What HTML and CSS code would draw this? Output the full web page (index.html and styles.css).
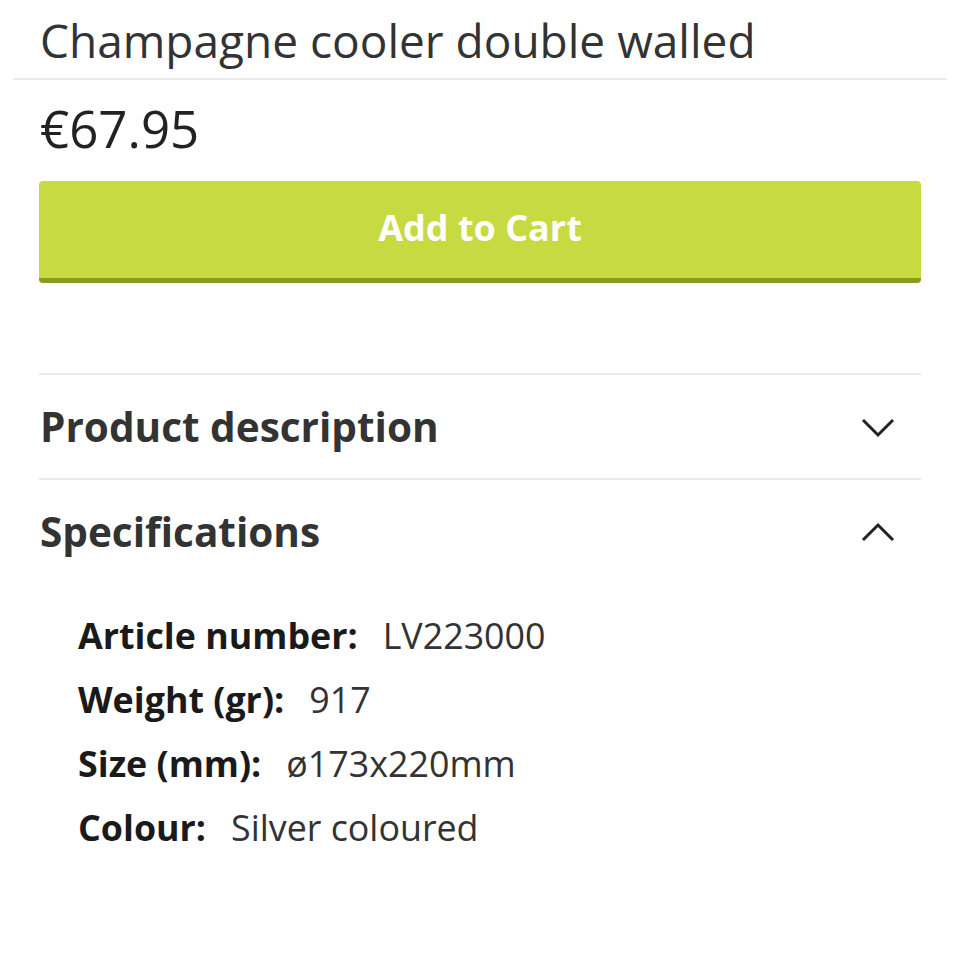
FILE: index.html
```html
<!DOCTYPE html>
<html>
<head>
<meta charset="utf-8">
<link rel="stylesheet" href="styles.css">
</head>
<body>
<div class="page">
  <h1 class="title">Champagne cooler double walled</h1>
  <div class="title-rule"></div>
  <div class="main">
    <div class="price">€67.95</div>
    <button class="cart-btn">Add to Cart</button>
    <div class="accordion">
      <div class="acc-item">
        <div class="acc-head">
          <span class="acc-title">Product description</span>
          <svg class="chev" width="34" height="22" viewBox="0 0 34 22"><polyline points="2,4 17,19 32,4" fill="none" stroke="#222" stroke-width="3"/></svg>
        </div>
      </div>
      <div class="acc-item open">
        <div class="acc-head">
          <span class="acc-title">Specifications</span>
          <svg class="chev" width="34" height="22" viewBox="0 0 34 22"><polyline points="2,19 17,4 32,19" fill="none" stroke="#222" stroke-width="3"/></svg>
        </div>
        <div class="specs">
          <div class="spec"><span class="label">Article number:</span><span class="value">LV223000</span></div>
          <div class="spec"><span class="label">Weight (gr):</span><span class="value">917</span></div>
          <div class="spec"><span class="label">Size (mm):</span><span class="value">ø173x220mm</span></div>
          <div class="spec"><span class="label">Colour:</span><span class="value">Silver coloured</span></div>
        </div>
      </div>
    </div>
  </div>
</div>
</body>
</html>
```
FILE: styles.css
```css
html, body {
  margin: 0;
  padding: 0;
  background: #fff;
}
body {
  font-family: "Open Sans", "Liberation Sans", sans-serif;
  color: #333;
}
.page {
  width: 960px;
}
.title {
  margin: 0;
  padding: 10px 40px 0;
  font-size: 46px;
  font-weight: 400;
  line-height: 60px;
  color: #333;
}
.title-rule {
  margin: 8px 13px 0;
  height: 2px;
  background: #e9e9e9;
}
.main {
  padding: 0 39px;
}
.price {
  font-size: 51px;
  line-height: 60px;
  color: #222;
  margin-top: 18px;
  padding-left: 1px;
}
.cart-btn {
  display: block;
  width: 100%;
  height: 102px;
  margin-top: 23px;
  border: none;
  border-bottom: 5px solid #8a9b22;
  border-radius: 4px;
  background: #c8da41;
  color: #fff;
  font-family: "Open Sans", "Liberation Sans", sans-serif;
  font-weight: 700;
  font-size: 36px;
  padding: 0 0 4px;
}
.accordion {
  margin-top: 90px;
}
.acc-item {
  border-top: 2px solid #ebebeb;
}
.acc-head {
  height: 103px;
  display: flex;
  align-items: center;
  justify-content: space-between;
  padding-left: 1px;
  padding-right: 26px;
}
.acc-title {
  font-size: 40.5px;
  font-weight: 700;
  color: #333;
}
.chev {
  display: block;
}
.specs {
  padding: 20px 0 0 39px;
  display: flex;
  flex-direction: column;
}
.spec {
  height: 64px;
  display: flex;
  align-items: center;
  font-size: 35.8px;
  line-height: 46px;
}
.label {
  font-weight: 700;
  color: #1a1a1a;
  margin-right: 25px;
}
.value {
  color: #333;
}
```
